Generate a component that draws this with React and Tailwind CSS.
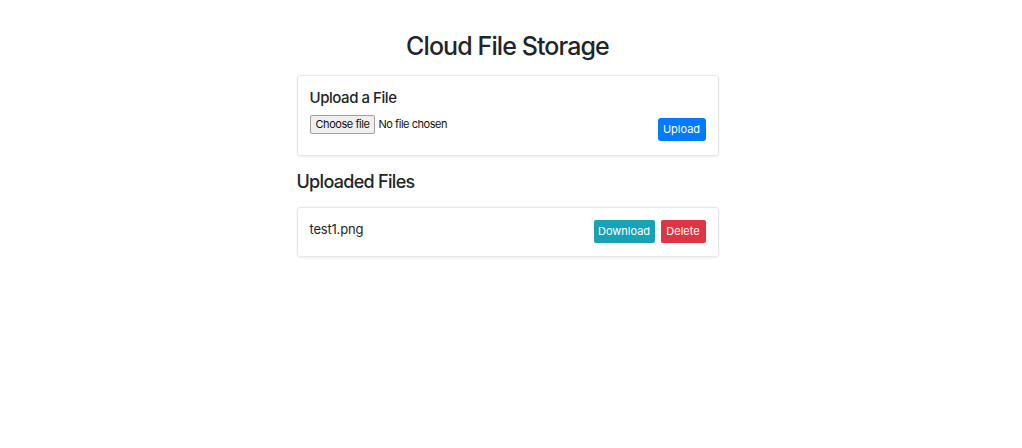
export default function App() {
  return (
    <div className="min-h-[448px] w-full bg-white text-[#212529]" style={{ fontFamily: "Inter, 'Liberation Sans', sans-serif" }}>
      <div className="flex justify-center pr-[7px]">
        <div className="w-[422px] pt-[30px]">
          <h1 className="text-center text-[25px] leading-[32px] font-medium tracking-[-0.9px]">Cloud File Storage</h1>
          <div className="mt-[13px] rounded-[3px] border border-[#e6e6e6] shadow-[0_1px_3px_rgba(0,0,0,0.08)] px-[12px] pt-[12px] pb-[14px]">
            <h2 className="text-[15px] leading-[20px] font-medium tracking-[-0.45px]">Upload a File</h2>
            <div className="mt-[7px] flex items-start justify-between">
              <div className="flex items-center text-[11px] tracking-[-0.45px]">
                <span className="h-[19px] flex items-center rounded-[2px] border border-[#a0a0a0] bg-[#efefef] px-[5px] text-[#111]">Choose file</span>
                <span className="ml-[3px] text-[#111]">No file chosen</span>
              </div>
              <button className="mt-[3px] h-[23px] w-[48px] rounded-[3px] bg-[#007bff] text-[11px] text-white">Upload</button>
            </div>
          </div>
          <h2 className="mt-[14px] text-[18px] leading-[24px] font-medium tracking-[-0.7px]">Uploaded Files</h2>
          <div className="mt-[13px] rounded-[3px] border border-[#e6e6e6] shadow-[0_1px_3px_rgba(0,0,0,0.08)] px-[12px] pt-[12px] pb-[13px] flex items-start justify-between">
            <span className="text-[13px] leading-[18px] tracking-[-0.2px]">test1.png</span>
            <div className="flex gap-[6px]">
              <button className="h-[23px] w-[61px] rounded-[2px] bg-[#17a2b8] text-[11px] text-white">Download</button>
              <button className="h-[23px] w-[45px] rounded-[2px] bg-[#dc3545] text-[11px] text-white">Delete</button>
            </div>
          </div>
        </div>
      </div>
    </div>
  );
}
